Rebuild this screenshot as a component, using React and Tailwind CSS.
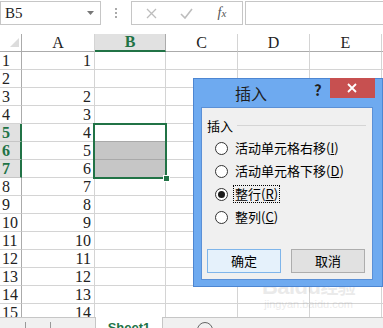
import React from "react";

const cols = ["A", "B", "C", "D", "E"];
const colA = ["1", "", "2", "3", "4", "5", "6", "7", "8", "9", "10", "11", "12", "13", "14"];
const selRows = [5, 6, 7];
const mono = { fontFamily: '"Liberation Serif", "DejaVu Serif", serif' };
const cjk = { fontFamily: '"Noto Sans CJK SC", "Noto Sans", sans-serif' };

function Radio({ checked }) {
  return (
    <span className="w-[13px] h-[13px] rounded-full border border-[#333] bg-white flex items-center justify-center shrink-0">
      {checked && <span className="w-[7px] h-[7px] rounded-full bg-[#1a1a1a]" />}
    </span>
  );
}

function Option({ label, hot, checked, focus }) {
  return (
    <div className="flex items-center gap-[6px] h-[22px] pl-[13px]">
      <Radio checked={checked} />
      <span className={`text-[13px] leading-[16px] text-black px-[1px] ${focus ? "outline outline-1 outline-dotted outline-black" : ""}`}>
        {label}(<span className="underline">{hot}</span>)
      </span>
    </div>
  );
}

function InsertDialog() {
  return (
    <div className="absolute left-[193px] top-[78px] w-[190px] h-[209px] bg-[#6eaaf0] border border-[#4d86d2] flex flex-col" style={cjk}>
      <div className="h-[28px] flex items-start">
        <div className="pl-[41px] pt-[4px] text-[16px] leading-[20px] text-[#1e1e1e]">插入</div>
        <div className="ml-[47px] pt-[2px] text-[15px] font-bold leading-[18px] text-[#1e1e1e]">?</div>
        <div className="ml-[8px] w-[45px] h-[20px] -mt-px bg-[#c75050] flex items-center justify-center">
          <svg width="10" height="10" viewBox="0 0 10 10">
            <path d="M1 1L9 9M9 1L1 9" stroke="#fff" strokeWidth="1.8" />
          </svg>
        </div>
      </div>
      <div className="ml-[7px] mr-[9px] h-[173px] bg-[#f0f0f0] border border-[#5b90d6] flex flex-col">
        <div className="flex items-center pl-[5px] pt-[9px] h-[26px]">
          <span className="text-[13px] leading-[16px] text-black">插入</span>
          <span className="ml-[4px] mr-[6px] flex-1 h-px bg-[#d5d5d5]" />
        </div>
        <div className="flex flex-col pt-[3px] gap-px">
          <Option label="活动单元格右移" hot="I" />
          <Option label="活动单元格下移" hot="D" />
          <Option label="整行" hot="R" checked focus />
          <Option label="整列" hot="C" />
        </div>
        <div className="flex gap-[10px] pl-[5px] mt-[21px]">
          <button className="w-[74px] h-[24px] bg-[#e5f1fb] border border-[#7fb5ea] text-[13px] text-black">确定</button>
          <button className="w-[74px] h-[24px] bg-[#e1e1e1] border border-[#adadad] text-[13px] text-black">取消</button>
        </div>
      </div>
    </div>
  );
}

export default function App() {
  return (
    <div className="relative w-[383px] h-[328px] bg-white overflow-hidden flex flex-col">
      {/* formula bar */}
      <div className="h-[34px] flex items-start pt-[1px] shrink-0">
        <div className="w-[101px] h-[24px] border border-[#c6c6c6] flex items-center justify-between pl-[4px] pr-[6px]">
          <span className="text-[15px] text-[#222]" style={mono}>B5</span>
          <svg width="7" height="4" viewBox="0 0 7 4"><path d="M0 0H7L3.5 4Z" fill="#777" /></svg>
        </div>
        <div className="w-[30px] h-[24px] flex flex-col items-center justify-center gap-[2px]">
          <span className="w-[2px] h-[2px] bg-[#aaa]" />
          <span className="w-[2px] h-[2px] bg-[#aaa]" />
          <span className="w-[2px] h-[2px] bg-[#aaa]" />
        </div>
        <div className="w-[112px] h-[24px] border border-[#c6c6c6] flex items-center">
          <div className="w-[38px] flex justify-center">
            <svg width="11" height="11" viewBox="0 0 11 11"><path d="M1 1L10 10M10 1L1 10" stroke="#bdbdbd" strokeWidth="1.3" /></svg>
          </div>
          <div className="w-[32px] flex justify-center">
            <svg width="13" height="11" viewBox="0 0 13 11"><path d="M1 6L5 10L12 1" stroke="#bdbdbd" strokeWidth="1.6" fill="none" /></svg>
          </div>
          <div className="flex-1 flex justify-center items-baseline text-[14px] leading-[16px] italic text-[#555]" style={{ fontFamily: '"Liberation Serif", serif' }}>
            <span>f</span><span className="text-[11px]">x</span>
          </div>
        </div>
        <div className="ml-[2px] flex-1 h-[24px] border border-[#c6c6c6] border-r-0" />
      </div>

      {/* grid */}
      <div className="relative flex-1 overflow-hidden">
        <div className="grid grid-cols-[22px_73px_71px_72px_72px_72px_1fr] auto-rows-[18px] text-[16px] leading-[18px] text-[#222]" style={mono}>
          <div className="border-r border-b border-[#ababab] flex items-end justify-end pr-[2px] pb-[4px]">
            <svg width="9" height="9" viewBox="0 0 9 9"><path d="M9 0V9H0Z" fill="#dcdcdc" /></svg>
          </div>
          {cols.map((c) =>
            c === "B" ? (
              <div key={c} className="bg-[#e1e1e1] border-r border-[#ababab] border-b-2 border-b-[#217346] flex items-center justify-center font-bold text-[#217346]">{c}</div>
            ) : (
              <div key={c} className="border-r border-b border-[#d4d4d4] border-b-[#ababab] flex items-center justify-center">{c}</div>
            )
          )}
          <div className="border-b border-[#ababab]" />
          {colA.map((v, i) => {
            const r = i + 1;
            const sel = selRows.includes(r);
            return (
              <React.Fragment key={r}>
                <div className={`border-b flex items-center pl-[2px] ${sel ? "bg-[#e1e1e1] border-b-[#c6c6c6] border-r-2 border-r-[#217346] font-bold text-[#217346]" : "border-r border-[#ababab] border-b-[#d4d4d4]"}`}>{r}</div>
                <div className="border-r border-b border-[#d4d4d4] flex items-center justify-end pr-[3px]">{v}</div>
                <div className={`border-r border-b border-[#d4d4d4] ${r === 6 || r === 7 ? "bg-[#c6c6c6] border-b-[#a9a9a9]" : ""} ${r === 5 ? "border-b-[#a9a9a9]" : ""}`} />
                <div className="border-r border-b border-[#d4d4d4]" />
                <div className="border-r border-b border-[#d4d4d4]" />
                <div className="border-r border-b border-[#d4d4d4]" />
                <div className="border-b border-[#d4d4d4]" />
              </React.Fragment>
            );
          })}
        </div>
        {/* selection outline */}
        <div className="absolute left-[93px] top-[89px] w-[74px] h-[56px] border-2 border-[#217346]" />
        <div className="absolute left-[163px] top-[141px] w-[7px] h-[7px] bg-[#217346] border border-white" />
        {/* watermark */}
        <div className="absolute left-[262px] top-[241px] flex flex-col items-center opacity-20 text-[#999]">
          <div className="text-[22px] font-bold leading-[22px] tracking-tight" style={{ fontFamily: '"Liberation Sans", sans-serif' }}>
            Baidu<span style={cjk} className="text-[18px]">经验</span>
          </div>
          <div className="text-[11px] leading-[12px]" style={{ fontFamily: '"Liberation Sans", sans-serif' }}>jingyan.baidu.com</div>
        </div>
      </div>

      {/* sheet tabs */}
      <div className="h-[11px] shrink-0 bg-[#f0f0f0] border-t border-[#c6c6c6] flex items-start relative">
        <span className="ml-[25px] mt-[4px] w-px h-[6px] bg-[#999]" />
        <span className="ml-[24px] mt-[4px] w-px h-[6px] bg-[#999]" />
        <div className="ml-[44px] -mt-px w-[68px] h-[12px] bg-white border-x border-[#c6c6c6] flex justify-center pt-[4px]">
          <span className="text-[13px] leading-[13px] font-bold text-[#217346]" style={{ fontFamily: '"Liberation Sans", sans-serif' }}>Sheet1</span>
        </div>
        <span className="ml-[34px] mt-[4px] w-[16px] h-[16px] rounded-full border border-[#666]" />
      </div>

      <InsertDialog />
    </div>
  );
}
